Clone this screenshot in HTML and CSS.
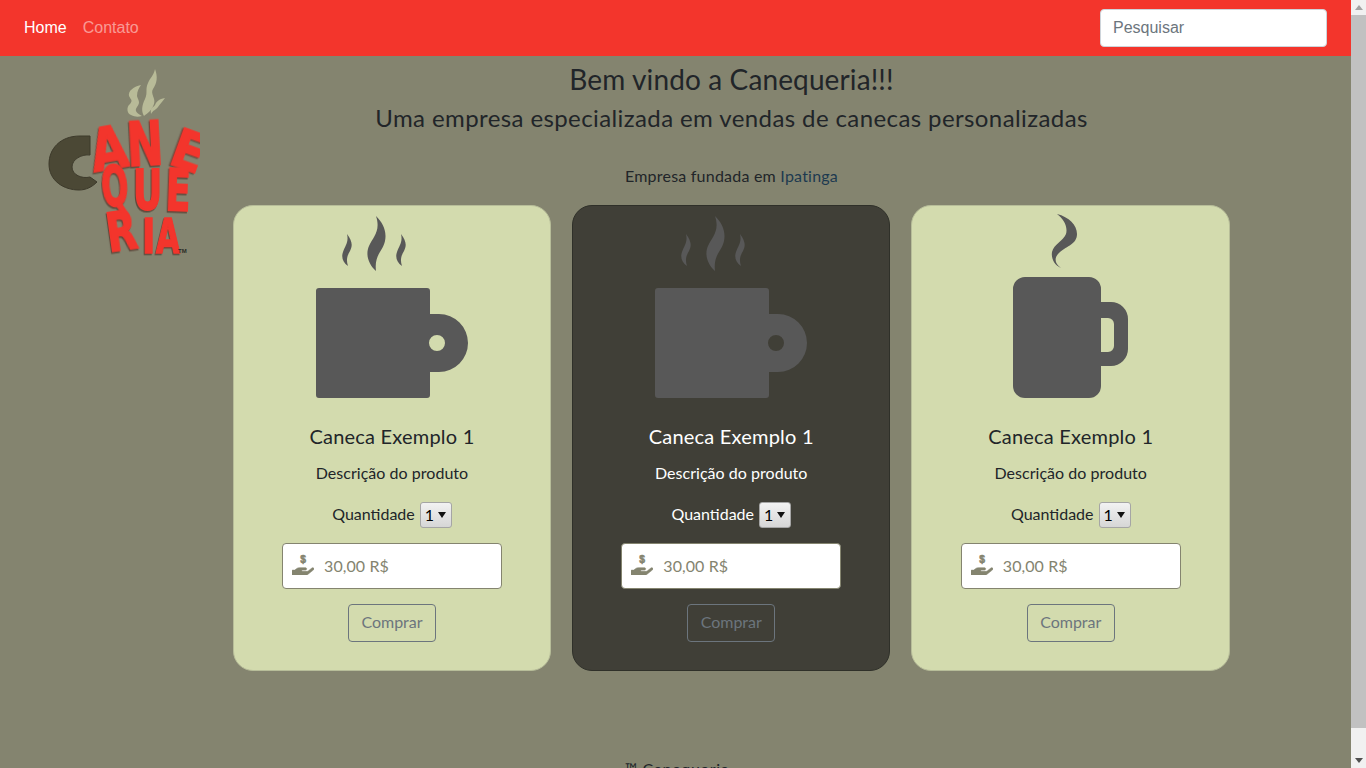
FILE: index.html
```html
<!DOCTYPE html>
<html lang="pt-BR">
<head>
    <meta charset="UTF-8">
    <meta name="viewport" content="width=device-width, initial-scale=1.0">
    <title>Canequeria</title>
    <link rel="stylesheet" href="styles.css">
</head>
<body>
    <nav class="navbar">
        <div class="nav-links">
            <a class="nav-link active" href="#">Home</a>
            <a class="nav-link" href="#">Contato</a>
        </div>
        <input class="search" type="text" placeholder="Pesquisar">
    </nav>

    <div class="page">
        <div class="logo-col">
            <svg class="logo" width="160" height="200" viewBox="0 0 160 200">
                <!-- steam -->
                <path class="steam" d="M115 0C118 8 117 14 113 20C110 25 116 29 114 35C112 41 108 44 104 47C101 42 102 36 105 30C108 24 105 20 108 14C110 9 114 6 115 0Z"/>
                <path class="steam" d="M101 16C93 18 88 22 89 27C91 31 93 31 90 35C86 38 87 45 91 46C95 48 98 48 102 47C97 44 94 42 97 38C101 33 98 31 97 27C97 22 99 19 101 16Z"/>
                <path class="steam" d="M125 29C119 30 116 33 115 36C113 39 110 38 111 45C113 41 116 41 118 38C120 35 123 32 125 29Z"/>
                <!-- handle -->
                <path class="handle" d="M50 67H40C20 67 9 80 9 95C9 112 24 121 39 121C46 121 52 118 57 113L50 108C42 110 32 106 32 98C32 90 42 85 50 86Z"/>
                <!-- letters -->
                <text class="letter" transform="translate(54 103) rotate(-10) scale(1.15 1.4)" font-size="42">A</text>
                <text class="letter" transform="translate(88 97) rotate(-3) scale(1.08 1.5)" font-size="40">N</text>
                <text class="letter" transform="translate(127 94) rotate(20) scale(1.2 1.35)" font-size="40">E</text>
                <text class="letter" transform="translate(63 137) rotate(-5) scale(.88 1.55)" font-size="36">Q</text>
                <text class="letter" transform="translate(93 140) scale(1 1.55)" font-size="36">U</text>
                <text class="letter" transform="translate(125 141) rotate(2) scale(1.02 1.6)" font-size="36">E</text>
                <text class="letter" transform="translate(69 183) rotate(-8) scale(1.1 1.5)" font-size="36">R</text>
                <text class="letter" transform="translate(102 184) scale(1 1.35)" font-size="36">I</text>
                <text class="letter" transform="translate(116 184) scale(.86 1.35)" font-size="36">A</text>
                <text class="tm" x="138" y="184">TM</text>
            </svg>
        </div>

        <main class="main">
            <h3 class="title">Bem vindo a Canequeria!!!</h3>
            <h4 class="subtitle">Uma empresa especializada em vendas de canecas personalizadas</h4>
            <p class="founded">Empresa fundada em <a href="#">Ipatinga</a></p>

            <div class="cards">
                <div class="card">
                    <svg class="mug" width="317" height="209" viewBox="1 1 317 209">
                        <path d="M143 11C150 18 154 26 152 36C150 46 141 50 143 66C136 60 132 50 136 41C140 32 148 26 143 11Z"/>
                        <path d="M114 29C119 36 120 40 117 46C114 51 113 55 115 61C110 58 108 52 110 47C112 41 116 37 114 29Z"/>
                        <path d="M168 29C173 36 174 40 171 46C168 51 167 55 169 61C164 58 162 52 164 47C166 41 170 37 168 29Z"/>
                        <path fill-rule="evenodd" d="M86 83H194a3 3 0 0 1 3 3V109H206A29 29 0 0 1 206 167H197V190a3 3 0 0 1 -3 3H86a3 3 0 0 1 -3 -3V86a3 3 0 0 1 3 -3ZM196 138a8 8 0 1 0 16 0a8 8 0 1 0 -16 0Z"/>
                    </svg>
                    <h5 class="card-title">Caneca Exemplo 1</h5>
                    <p class="card-text">Descrição do produto</p>
                    <div class="qty">
                        <label>Quantidade</label>
                        <span class="select-wrap"><select><option>1</option><option>2</option><option>3</option></select></span>
                    </div>
                    <div class="price">
                        <svg class="hand" width="22" height="22" viewBox="0 0 576 576">
                            <path d="M565.3 392.1c-11.8-10.7-30.2-10-42.6 0L430.3 466c-11.3 9.1-25.4 14-40 14H272c-8.8 0-16-7.2-16-16s7.2-16 16-16h78.3c15.9 0 30.7-10.9 33.3-26.6 3.3-20-12.1-37.4-31.6-37.4H192c-27 0-53.1 9.3-74.1 26.3L71.4 448H16c-8.8 0-16 7.2-16 16v96c0 8.8 7.2 16 16 16h356.8c14.5 0 28.6-4.9 40-14l151.2-121c15.2-12.2 16.4-34.8 1.3-48.9z"/>
                            <text x="288" y="262" text-anchor="middle" font-size="270">$</text>
                        </svg>
                        <input class="price-input" type="text" placeholder="30,00 R$">
                    </div>
                    <button class="buy">Comprar</button>
                </div>

                <div class="card dark">
                    <svg class="mug" width="317" height="209" viewBox="1 1 317 209">
                        <path d="M143 11C150 18 154 26 152 36C150 46 141 50 143 66C136 60 132 50 136 41C140 32 148 26 143 11Z"/>
                        <path d="M114 29C119 36 120 40 117 46C114 51 113 55 115 61C110 58 108 52 110 47C112 41 116 37 114 29Z"/>
                        <path d="M168 29C173 36 174 40 171 46C168 51 167 55 169 61C164 58 162 52 164 47C166 41 170 37 168 29Z"/>
                        <path fill-rule="evenodd" d="M86 83H194a3 3 0 0 1 3 3V109H206A29 29 0 0 1 206 167H197V190a3 3 0 0 1 -3 3H86a3 3 0 0 1 -3 -3V86a3 3 0 0 1 3 -3ZM196 138a8 8 0 1 0 16 0a8 8 0 1 0 -16 0Z"/>
                    </svg>
                    <h5 class="card-title">Caneca Exemplo 1</h5>
                    <p class="card-text">Descrição do produto</p>
                    <div class="qty">
                        <label>Quantidade</label>
                        <span class="select-wrap"><select><option>1</option><option>2</option><option>3</option></select></span>
                    </div>
                    <div class="price">
                        <svg class="hand" width="22" height="22" viewBox="0 0 576 576">
                            <path d="M565.3 392.1c-11.8-10.7-30.2-10-42.6 0L430.3 466c-11.3 9.1-25.4 14-40 14H272c-8.8 0-16-7.2-16-16s7.2-16 16-16h78.3c15.9 0 30.7-10.9 33.3-26.6 3.3-20-12.1-37.4-31.6-37.4H192c-27 0-53.1 9.3-74.1 26.3L71.4 448H16c-8.8 0-16 7.2-16 16v96c0 8.8 7.2 16 16 16h356.8c14.5 0 28.6-4.9 40-14l151.2-121c15.2-12.2 16.4-34.8 1.3-48.9z"/>
                            <text x="288" y="262" text-anchor="middle" font-size="270">$</text>
                        </svg>
                        <input class="price-input" type="text" placeholder="30,00 R$">
                    </div>
                    <button class="buy">Comprar</button>
                </div>

                <div class="card">
                    <svg class="mug" width="317" height="209" viewBox="1 1 317 209">
                        <path d="M146 9C158 12 166 20 166 29C166 39 156 41 149 47C143 52 143 58 150 63C143 60 140 53 141 47C143 39 152 36 155 29C157 22 153 14 146 9Z"/>
                        <path fill-rule="evenodd" d="M114 72H178a12 12 0 0 1 12 12V97H200a17 17 0 0 1 17 17V144a17 17 0 0 1 -17 17H190V181a12 12 0 0 1 -12 12H114a12 12 0 0 1 -12 -12V84a12 12 0 0 1 12 -12ZM190 113V147H197a6 6 0 0 0 6 -6V119a6 6 0 0 0 -6 -6Z"/>
                    </svg>
                    <h5 class="card-title">Caneca Exemplo 1</h5>
                    <p class="card-text">Descrição do produto</p>
                    <div class="qty">
                        <label>Quantidade</label>
                        <span class="select-wrap"><select><option>1</option><option>2</option><option>3</option></select></span>
                    </div>
                    <div class="price">
                        <svg class="hand" width="22" height="22" viewBox="0 0 576 576">
                            <path d="M565.3 392.1c-11.8-10.7-30.2-10-42.6 0L430.3 466c-11.3 9.1-25.4 14-40 14H272c-8.8 0-16-7.2-16-16s7.2-16 16-16h78.3c15.9 0 30.7-10.9 33.3-26.6 3.3-20-12.1-37.4-31.6-37.4H192c-27 0-53.1 9.3-74.1 26.3L71.4 448H16c-8.8 0-16 7.2-16 16v96c0 8.8 7.2 16 16 16h356.8c14.5 0 28.6-4.9 40-14l151.2-121c15.2-12.2 16.4-34.8 1.3-48.9z"/>
                            <text x="288" y="262" text-anchor="middle" font-size="270">$</text>
                        </svg>
                        <input class="price-input" type="text" placeholder="30,00 R$">
                    </div>
                    <button class="buy">Comprar</button>
                </div>
            </div>

            <footer class="footer">™ Canequeria</footer>
        </main>
    </div>

    <div class="scrollbar">
        <span class="arrow-up"></span>
        <span class="thumb"></span>
        <span class="arrow-down"></span>
    </div>
</body>
</html>
```

FILE: styles.css
```css
body {
    font-family: 'Lato', sans-serif;
    font-size: 16px;
    line-height: 1.5;
    color: #212529;
    margin: 0;
    padding: 0 15px 0 0;
    min-height: 795px;
    background-color: #84846f;
}

/* the window's scrollbar, drawn over the page */
.scrollbar {
    position: fixed;
    top: 0;
    right: 0;
    bottom: 0;
    width: 15px;
    display: flex;
    flex-direction: column;
    align-items: center;
    background-color: #f1f1f1;
}
.arrow-up {
    margin: 5px 0 5px;
    border-left: 4px solid transparent;
    border-right: 4px solid transparent;
    border-bottom: 5px solid #a3a3a3;
}
.thumb {
    width: 15px;
    height: 713px;
    background-color: #c1c1c1;
}
.arrow-down {
    margin-top: 30px;
    border-left: 4px solid transparent;
    border-right: 4px solid transparent;
    border-top: 5px solid #505050;
}

/* navbar */
.navbar {
    display: flex;
    justify-content: space-between;
    align-items: center;
    height: 56px;
    box-sizing: border-box;
    padding: 0 24px;
    background-color: #f3352c;
    font-family: 'Liberation Sans', Arial, sans-serif;
}
.nav-links {
    display: flex;
    gap: 16px;
}
.nav-link {
    color: rgba(255, 255, 255, 0.5);
    text-decoration: none;
}
.nav-link.active {
    color: white;
}
.search {
    width: 227px;
    height: 38px;
    box-sizing: border-box;
    padding: 6px 12px;
    border: 1px solid #ced4da;
    border-radius: 4px;
    font-family: inherit;
    font-size: 16px;
}
.search::placeholder {
    color: #6c757d;
}

/* page */
.page {
    display: flex;
}
.logo-col {
    width: 225px;
    flex-shrink: 0;
}
.logo {
    display: block;
    margin: 13px 0 0 40px;
}
.steam {
    fill: #b8bb98;
}
.handle {
    fill: #4b4835;
    stroke: #3d3a2b;
    stroke-width: 1;
}
.letter {
    fill: #f3352c;
    stroke: #f3352c;
    stroke-width: 1.2;
    font-family: 'DejaVu Sans', sans-serif;
    font-weight: bold;
    filter: drop-shadow(-1px 1px 0 #5f4a3c);
}
.tm {
    fill: #2a2a24;
    font-family: 'Liberation Sans', Arial, sans-serif;
    font-size: 6px;
    font-weight: bold;
}
.main {
    width: 1013px;
    flex-shrink: 0;
    text-align: center;
}
.title {
    margin: 5px 0 0;
    font-size: 28px;
    font-weight: 400;
    line-height: 36px;
    letter-spacing: 0.12px;
}
.subtitle {
    margin: 3px 0 0;
    font-size: 24px;
    font-weight: 400;
    line-height: 36px;
    letter-spacing: 0.4px;
}
.founded {
    margin: 28px 0 0;
    line-height: 24px;
    letter-spacing: 0.22px;
}
.founded a {
    color: #1d3a4f;
    text-decoration: none;
}

/* cards */
.cards {
    display: grid;
    grid-template-columns: 318.5px 318px 319px;
    gap: 21px;
    justify-content: center;
    margin-top: 17px;
}
.card {
    display: flex;
    flex-direction: column;
    align-items: center;
    height: 466px;
    box-sizing: border-box;
    background-color: #d3dbae;
    border: 1px solid #b7bd99;
    border-radius: 20px;
}
.card.dark {
    background-color: #403f37;
    border-color: #2f3029;
    color: white;
}
.mug {
    display: block;
    flex-shrink: 0;
    fill: #585858;
}
.card-title {
    margin: 6px 0 0;
    font-size: 20px;
    font-weight: 400;
    line-height: 30px;
    letter-spacing: 0.2px;
}
.card-text {
    margin: 10px 0 0;
    line-height: 24px;
    letter-spacing: 0.03px;
}
.qty {
    display: flex;
    align-items: center;
    gap: 5px;
    margin-top: 17px;
}
.qty label {
    margin-bottom: 2px;
}
.select-wrap {
    position: relative;
    display: block;
}
.select-wrap::after {
    content: "";
    position: absolute;
    right: 6px;
    top: 10px;
    border-left: 4px solid transparent;
    border-right: 4px solid transparent;
    border-top: 6px solid #111;
    pointer-events: none;
}
select {
    display: block;
    appearance: none;
    width: 32px;
    height: 26px;
    padding: 0 0 2px 4px;
    border: 1px solid #a5a5a5;
    border-radius: 3px;
    background: linear-gradient(#f2f2f2, #d6d6d6);
    color: #000;
    font-family: 'Lato', sans-serif;
    font-size: 16px;
}
.price {
    position: relative;
    width: 220px;
    margin-top: 15px;
}
.hand {
    position: absolute;
    left: 10px;
    top: 10px;
    fill: #84846f;
    stroke: #84846f;
    stroke-width: 14;
    font-family: 'Liberation Sans', Arial, sans-serif;
    font-weight: bold;
}
.price-input {
    display: block;
    width: 100%;
    height: 46px;
    box-sizing: border-box;
    padding: 0 12px 2px 41px;
    border: 1px solid #84846f;
    border-radius: 4px;
    background-color: white;
    font-family: 'Lato', sans-serif;
    font-size: 16px;
    letter-spacing: 0.1px;
}
.price-input::placeholder {
    color: #84846f;
}
.buy {
    width: 88px;
    height: 38px;
    margin-top: 15px;
    padding: 0 0 3px;
    background-color: transparent;
    border: 1px solid #6c757d;
    border-radius: 4px;
    color: #6c757d;
    font-family: 'Lato', sans-serif;
    font-size: 16px;
    cursor: pointer;
}
.footer {
    margin-top: 86px;
    padding-left: 400px;
    text-align: left;
    line-height: 24px;
    letter-spacing: 0.7px;
}
```
